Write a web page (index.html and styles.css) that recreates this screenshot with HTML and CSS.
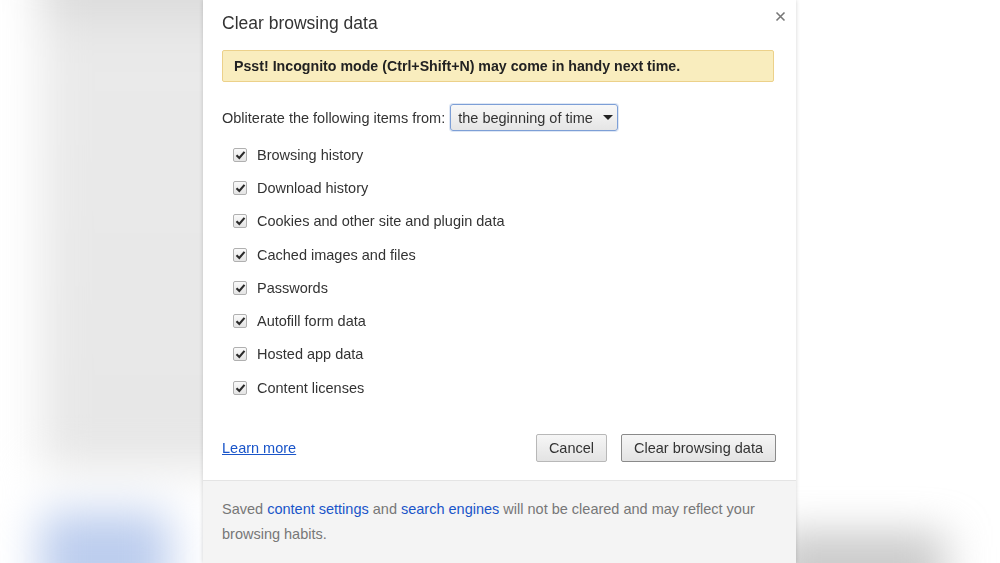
FILE: index.html
```html
<!DOCTYPE html>
<html>
<head>
<meta charset="utf-8">
<link rel="stylesheet" href="styles.css">
</head>
<body>
<div class="backdrop">
  <div class="bg-side"></div>
  <div class="bg-blue"></div>
  <div class="bg-bar"></div>
</div>
<div class="dialog">
  <div class="dialog-body">
    <h1 class="title">Clear browsing data</h1>
    <button class="close" aria-label="Close">
      <svg width="11" height="11" viewBox="0 0 11 11"><path d="M1.5 1.5L9.5 9.5M9.5 1.5L1.5 9.5" stroke="#777" stroke-width="1.6"/></svg>
    </button>
    <div class="banner">Psst! Incognito mode (Ctrl+Shift+N) may come in handy next time.</div>
    <div class="range-row">
      <span>Obliterate the following items from:</span>
      <div class="select">the beginning of time <span class="caret"></span></div>
    </div>
    <ul class="items">
      <li><span class="cb"><svg width="11" height="10" viewBox="0 0 11 10"><path d="M1.5 5.2L4.3 8L9.5 1.8" fill="none" stroke="#2b2b2b" stroke-width="2.1"/></svg></span>Browsing history</li>
      <li><span class="cb"><svg width="11" height="10" viewBox="0 0 11 10"><path d="M1.5 5.2L4.3 8L9.5 1.8" fill="none" stroke="#2b2b2b" stroke-width="2.1"/></svg></span>Download history</li>
      <li><span class="cb"><svg width="11" height="10" viewBox="0 0 11 10"><path d="M1.5 5.2L4.3 8L9.5 1.8" fill="none" stroke="#2b2b2b" stroke-width="2.1"/></svg></span>Cookies and other site and plugin data</li>
      <li><span class="cb"><svg width="11" height="10" viewBox="0 0 11 10"><path d="M1.5 5.2L4.3 8L9.5 1.8" fill="none" stroke="#2b2b2b" stroke-width="2.1"/></svg></span>Cached images and files</li>
      <li><span class="cb"><svg width="11" height="10" viewBox="0 0 11 10"><path d="M1.5 5.2L4.3 8L9.5 1.8" fill="none" stroke="#2b2b2b" stroke-width="2.1"/></svg></span>Passwords</li>
      <li><span class="cb"><svg width="11" height="10" viewBox="0 0 11 10"><path d="M1.5 5.2L4.3 8L9.5 1.8" fill="none" stroke="#2b2b2b" stroke-width="2.1"/></svg></span>Autofill form data</li>
      <li><span class="cb"><svg width="11" height="10" viewBox="0 0 11 10"><path d="M1.5 5.2L4.3 8L9.5 1.8" fill="none" stroke="#2b2b2b" stroke-width="2.1"/></svg></span>Hosted app data</li>
      <li><span class="cb"><svg width="11" height="10" viewBox="0 0 11 10"><path d="M1.5 5.2L4.3 8L9.5 1.8" fill="none" stroke="#2b2b2b" stroke-width="2.1"/></svg></span>Content licenses</li>
    </ul>
    <div class="actions">
      <a class="learn" href="#">Learn more</a>
      <div class="btns">
        <button class="btn">Cancel</button>
        <button class="btn btn-default">Clear browsing data</button>
      </div>
    </div>
  </div>
  <div class="dialog-footer">
    <p class="footnote"><span>Saved </span><a href="#">content settings</a><span> and </span><a href="#">search engines</a><span> will not be cleared and may reflect your</span> <span>browsing habits.</span></p>
  </div>
</div>
</body>
</html>
```
FILE: styles.css
```css
html, body {
  margin: 0;
  padding: 0;
  width: 1000px;
  height: 563px;
  overflow: hidden;
  background: #ffffff;
  font-family: "Liberation Sans", Arial, sans-serif;
}
body {
  position: relative;
}
.backdrop {
  position: absolute;
  inset: 0;
  filter: blur(22px);
}
.bg-side {
  position: absolute;
  left: 40px;
  top: -40px;
  width: 260px;
  height: 510px;
  background: linear-gradient(#d0d0d0 0, #e2e2e2 55px, #eaeaea 85px, #e7e7e7 100%);
}
.bg-blue {
  position: absolute;
  left: 40px;
  top: 512px;
  width: 130px;
  height: 51px;
  border-radius: 10px;
  background: #bccdee;
  box-shadow: 0 40px 0 0 #bccdee;
}
.bg-bar {
  position: absolute;
  left: 770px;
  top: 538px;
  width: 175px;
  height: 25px;
  background: #adadad;
  box-shadow: 0 40px 0 0 #adadad;
}
.dialog {
  position: absolute;
  left: 203px;
  top: 0;
  bottom: 0;
  width: 593px;
  background: #fff;
  box-shadow: 0 0 4px rgba(0,0,0,0.18);
  display: flex;
  flex-direction: column;
}
.dialog-body {
  position: relative;
  padding: 12px 22px 18px 19px;
  color: #333;
}
.title {
  margin: 0;
  font-size: 17.5px;
  font-weight: normal;
  line-height: 22px;
  color: #333;
}
.close {
  position: absolute;
  top: 11px;
  right: 9px;
  width: 12px;
  height: 12px;
  padding: 0;
  border: 0;
  background: none;
  display: flex;
}
.banner {
  margin-top: 16px;
  background: #f9edbe;
  border: 1px solid #ecd18a;
  border-radius: 2px;
  padding: 6px 11px;
  font-size: 14.2px;
  line-height: 18px;
  font-weight: bold;
  color: #222;
}
.range-row {
  margin-top: 22px;
  display: flex;
  align-items: center;
  gap: 5px;
  font-size: 14.5px;
  height: 27px;
}
.select {
  box-sizing: border-box;
  height: 27px;
  width: 168px;
  border: 1px solid #7d9fd6;
  border-radius: 3px;
  background: linear-gradient(#f8f8f8, #e5e5e5);
  display: flex;
  align-items: center;
  padding-left: 7px;
  gap: 10px;
  font-size: 14.5px;
  color: #333;
  box-shadow: 0 0 0 1px rgba(125,159,214,0.25);
}
.caret {
  width: 0;
  height: 0;
  border-left: 5px solid transparent;
  border-right: 5px solid transparent;
  border-top: 5px solid #222;
}
.items {
  list-style: none;
  margin: 7px 0 0 0;
  padding: 0;
}
.items li {
  height: 33.3px;
  display: flex;
  align-items: center;
  gap: 10px;
  padding-left: 11px;
  font-size: 14.5px;
  color: #333;
}
.cb {
  box-sizing: border-box;
  width: 14px;
  height: 14px;
  border: 1px solid #b0b0b0;
  border-radius: 2px;
  background: linear-gradient(#fafafa, #e4e4e4);
  display: flex;
  align-items: center;
  justify-content: center;
}
.actions {
  margin-top: 30px;
  display: flex;
  align-items: center;
  justify-content: space-between;
}
.learn {
  color: #1a55c9;
  font-size: 14.5px;
  text-decoration: underline;
}
.btns {
  display: flex;
  gap: 14px;
  margin-right: -2px;
}
.btn {
  height: 28px;
  padding: 0 12px;
  border: 1px solid #b8b8b8;
  border-radius: 2px;
  background: linear-gradient(#f6f6f6, #e3e3e3);
  font-family: "Liberation Sans", Arial, sans-serif;
  font-size: 14.5px;
  color: #333;
}
.btn-default {
  border-color: #8a8a8a;
}
.dialog-footer {
  flex: 1;
  background: #f4f4f4;
  border-top: 1px solid #e4e4e4;
  padding: 16px 22px 0 19px;
}
.footnote {
  margin: 0;
  font-size: 14.5px;
  line-height: 25px;
  color: #777;
}
.footnote a {
  color: #1a55c9;
  text-decoration: none;
}
```
